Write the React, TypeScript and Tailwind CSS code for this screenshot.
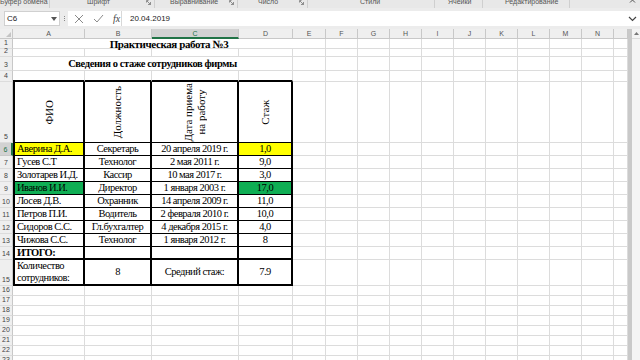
import React from 'react';

// Excel sheet: columns A..N plus the partial column before the scrollbar
const COLS = ['A', 'B', 'C', 'D', 'E', 'F', 'G', 'H', 'I', 'J', 'K', 'L', 'M', 'N', ''];
const WIDTHS = [
  'w-[72px]', 'w-[67px]', 'w-[87px]', 'w-[54px]', 'w-[33px]',
  'w-[32px]', 'w-[32px]', 'w-[32px]', 'w-[32px]', 'w-[32px]',
  'w-[32px]', 'w-[32px]', 'w-[32px]', 'w-[32px]', 'w-[14px]',
];

const GRID = 'shrink-0 border-r border-b border-[#dcdcdc]';
const SERIF = "font-['Liberation_Serif',serif] text-[10.5px] tracking-[-0.5px] text-black";

const people = [
  { name: 'Аверина Д.А.', pos: 'Секретарь', date: '20 апреля 2019 г.', st: '1,0', mark: 'bg-[#ffff00]' },
  { name: 'Гусев С.Т', pos: 'Технолог', date: '2 мая 2011 г.', st: '9,0', mark: '' },
  { name: 'Золотарев И.Д.', pos: 'Кассир', date: '10 мая 2017 г.', st: '3,0', mark: '' },
  { name: 'Иванов И.И.', pos: 'Директор', date: '1 января 2003 г.', st: '17,0', mark: 'bg-[#0fae54]' },
  { name: 'Лосев Д.В.', pos: 'Охранник', date: '14 апреля 2009 г.', st: '11,0', mark: '' },
  { name: 'Петров П.И.', pos: 'Водитель', date: '2 февраля 2010 г.', st: '10,0', mark: '' },
  { name: 'Сидоров С.С.', pos: 'Гл.бухгалтер', date: '4 декабря 2015 г.', st: '4,0', mark: '' },
  { name: 'Чижова С.С.', pos: 'Технолог', date: '1 января 2012 г.', st: '8', mark: '' },
];

function RowHead({ n, active }: { n: number; active?: boolean }) {
  return (
    <div
      className={
        active
          ? 'w-[13px] shrink-0 flex items-end justify-center bg-[#d2d2d2] border-r-2 border-r-[#217346] border-b border-b-[#c8c8c8] text-[7px] leading-[10px] tracking-normal text-[#217346] font-["Liberation_Sans",sans-serif]'
          : 'w-[13px] shrink-0 flex items-end justify-center bg-[#efefef] border-r border-r-[#c8c8c8] border-b border-b-[#dcdcdc] text-[7px] leading-[10px] tracking-normal text-[#444] font-["Liberation_Sans",sans-serif]'
      }
    >
      {n}
    </div>
  );
}

function Rest({ from }: { from: number }) {
  return (
    <>
      {WIDTHS.slice(from).map((w, i) => (
        <div key={i} className={`${w} ${GRID}`} />
      ))}
    </>
  );
}

function Ribbon() {
  const groups = [
    { w: 'w-[50px]', ml: 'ml-[0px]', label: 'Буфер обмена', icon: true },
    { w: 'w-[105px]', ml: 'ml-[37px]', label: 'Шрифт', icon: true },
    { w: 'w-[83px]', ml: 'ml-[15px]', label: 'Выравнивание', icon: true },
    { w: 'w-[70px]', ml: 'ml-[20px]', label: 'Число', icon: true },
    { w: 'w-[127px]', ml: 'ml-[52px]', label: 'Стили', icon: false },
    { w: 'w-[48px]', ml: 'ml-[13px]', label: 'Ячейки', icon: false },
    { w: 'w-[87px]', ml: 'ml-[22px]', label: 'Редактирование', icon: false },
  ];
  return (
    <div className="h-[8px] bg-[#e8e8e8] flex overflow-hidden font-['Liberation_Sans',sans-serif] text-[7px] leading-[8px] text-[#555]">
      {groups.map((g, i) => (
        <div key={i} className={`${g.w} shrink-0 flex items-start border-r border-[#cfcfcf] -mt-[2px]`}>
          <span className={`${g.ml} whitespace-nowrap`}>{g.label}</span>
          {g.icon && (
            <svg width="5" height="5" viewBox="0 0 5 5" className="ml-auto mr-[3px] mt-[2px]">
              <path d="M0.5 0.5h2M0.5 0.5v2M1 1l3.5 3.5M4.5 2v2.5H2" stroke="#777" strokeWidth="0.8" fill="none" />
            </svg>
          )}
        </div>
      ))}
      <div className="flex-1 flex justify-end pr-[4px] -mt-[1px]">
        <svg width="7" height="4" viewBox="0 0 7 4"><path d="M1 3.5L3.5 1 6 3.5" stroke="#555" strokeWidth="1" fill="none" /></svg>
      </div>
    </div>
  );
}

function FormulaBar() {
  return (
    <div className="h-[21px] bg-[#ececec] flex items-center pl-[4px] font-['Liberation_Sans',sans-serif]">
      <div className="w-[56px] h-[15px] bg-white border border-[#d0d0d0] flex items-center justify-between px-[2px] text-[8px] text-[#222]">
        <span>C6</span>
        <svg width="6" height="4" viewBox="0 0 6 4"><path d="M0 0h6L3 4z" fill="#555" /></svg>
      </div>
      <div className="w-[8px] flex flex-col items-center gap-[1px]">
        <span className="w-[1px] h-[1px] bg-[#888]" />
        <span className="w-[1px] h-[1px] bg-[#888]" />
        <span className="w-[1px] h-[1px] bg-[#888]" />
      </div>
      <div className="flex-1 h-[15px] bg-white flex items-center">
        <div className="w-[54px] flex items-center gap-[9px] pl-[6px] border-r border-[#d8d8d8] h-full">
          <svg width="10" height="10" viewBox="0 0 10 10"><path d="M1 1l8 8M9 1l-8 8" stroke="#8a8a8a" strokeWidth="1" /></svg>
          <svg width="11" height="9" viewBox="0 0 11 9"><path d="M1 5l3 3 6-7" stroke="#8a8a8a" strokeWidth="1" fill="none" /></svg>
          <span className="font-['Liberation_Serif',serif] italic text-[10px] text-[#444] leading-none">fx</span>
        </div>
        <span className="pl-[8px] text-[8px] text-[#222] flex-1">20.04.2019</span>
        <svg width="9" height="6" viewBox="0 0 9 6" className="mr-[3px]"><path d="M1 1l3.5 3.5L8 1" stroke="#444" strokeWidth="1.2" fill="none" /></svg>
      </div>
    </div>
  );
}

function HeaderRow() {
  return (
    <div className="flex h-[10px] font-['Liberation_Sans',sans-serif] text-[7px] leading-[9px] tracking-normal">
      <div className="w-[13px] shrink-0 bg-[#efefef] border-r border-b border-[#c8c8c8] flex items-end justify-end p-[1px]">
        <svg width="5" height="5" viewBox="0 0 5 5"><path d="M5 0v5H0z" fill="#c4c4c4" /></svg>
      </div>
      {COLS.map((c, i) => (
        <div
          key={i}
          className={
            i === 2
              ? `${WIDTHS[i]} shrink-0 bg-[#d2d2d2] border-r border-r-[#c8c8c8] border-b-2 border-b-[#217346] text-center text-[#217346]`
              : `${WIDTHS[i]} shrink-0 bg-[#efefef] border-r border-b border-[#c8c8c8] text-center text-[#555]`
          }
        >
          {c}
        </div>
      ))}
    </div>
  );
}

const TOP = 'shrink-0 border-r border-r-[#dcdcdc] border-b-2 border-b-black';
const TA = 'shrink-0 border-l-2 border-l-black border-r-2 border-r-black border-b border-b-black';
const TX = 'shrink-0 border-r-2 border-r-black border-b border-b-black';
const TA2 = 'shrink-0 border-l-2 border-l-black border-r-2 border-r-black border-b-2 border-b-black';
const TX2 = 'shrink-0 border-r-2 border-r-black border-b-2 border-b-black';

function Vert({ children }: { children: React.ReactNode }) {
  return <span className="[writing-mode:vertical-rl] rotate-180 text-center text-[11px] tracking-normal leading-[13px]">{children}</span>;
}

function Sheet() {
  return (
    <div className={`w-[628px] shrink-0 ${SERIF}`}>
      <HeaderRow />
      {/* 1 */}
      <div className="flex h-[10px]">
        <RowHead n={1} />
        <div className={`w-[313px] ${GRID} flex items-center justify-center font-bold text-[11px] tracking-[-0.4px] leading-[10px]`}>Практическая работа №3</div>
        <Rest from={5} />
      </div>
      {/* 2 */}
      <div className="flex h-[8px]">
        <RowHead n={2} />
        <Rest from={0} />
      </div>
      {/* 3 */}
      <div className="flex h-[14px]">
        <RowHead n={3} />
        <div className={`w-[280px] ${GRID} flex items-center justify-center font-bold tracking-[-0.4px] leading-[12px]`}>Сведения о стаже сотрудников фирмы</div>
        <Rest from={4} />
      </div>
      {/* 4 */}
      <div className="flex h-[11px]">
        <RowHead n={4} />
        <div className={`w-[72px] ${TOP}`} />
        <div className={`w-[67px] ${TOP}`} />
        <div className={`w-[87px] ${TOP}`} />
        <div className={`w-[54px] ${TOP}`} />
        <Rest from={4} />
      </div>
      {/* 5 */}
      <div className="flex h-[61px]">
        <RowHead n={5} />
        <div className={`w-[72px] ${TA} flex items-center justify-center`}><Vert>ФИО</Vert></div>
        <div className={`w-[67px] ${TX} flex items-center justify-center`}><Vert>Должность</Vert></div>
        <div className={`w-[87px] ${TX} flex items-center justify-center`}><Vert>Дата приема<br />на работу</Vert></div>
        <div className={`w-[54px] ${TX} flex items-center justify-center`}><Vert>Стаж</Vert></div>
        <Rest from={4} />
      </div>
      {people.map((p, i) => (
        <div key={i} className="flex h-[13px] leading-[12px]">
          <RowHead n={6 + i} active={i === 0} />
          <div className={`w-[72px] ${TA} ${p.mark} pl-[2px] whitespace-nowrap`}>{p.name}</div>
          <div className={`w-[67px] ${TX} text-center whitespace-nowrap`}>{p.pos}</div>
          <div className={`w-[87px] ${TX} text-center whitespace-nowrap`}>{p.date}</div>
          <div className={`w-[54px] ${TX} ${p.mark} text-center`}>{p.st}</div>
          <Rest from={4} />
        </div>
      ))}
      {/* 14 */}
      <div className="flex h-[13px] leading-[12px]">
        <RowHead n={14} />
        <div className={`w-[72px] ${TA2} pl-[2px] font-bold`}>ИТОГО:</div>
        <div className={`w-[67px] ${TX2}`} />
        <div className={`w-[87px] ${TX2}`} />
        <div className={`w-[54px] ${TX2}`} />
        <Rest from={4} />
      </div>
      {/* 15 */}
      <div className="flex h-[26px] leading-[12px]">
        <RowHead n={15} />
        <div className={`w-[72px] ${TA2} pl-[2px] flex flex-col justify-center`}>
          <span>Количество</span>
          <span>сотрудников:</span>
        </div>
        <div className={`w-[67px] ${TX2} flex items-center justify-center`}>8</div>
        <div className={`w-[87px] ${TX2} flex items-center justify-center`}>Средний стаж:</div>
        <div className={`w-[54px] ${TX2} flex items-center justify-center`}>7.9</div>
        <Rest from={4} />
      </div>
      {[16, 17, 18, 19, 20, 21, 22, 23].map((n) => (
        <div key={n} className="flex h-[10px]">
          <RowHead n={n} />
          <Rest from={0} />
        </div>
      ))}
    </div>
  );
}

function ScrollBar() {
  return (
    <div className="w-[12px] shrink-0 flex">
      <div className="w-[4px] bg-[#c9c9c9]" />
      <div className="flex-1 bg-[#f4f4f4] flex flex-col items-center">
        <div className="h-[10px] w-full flex items-center justify-center border-b border-[#dcdcdc]">
          <svg width="5" height="3" viewBox="0 0 5 3"><path d="M0 3L2.5 0 5 3z" fill="#777" /></svg>
        </div>
      </div>
    </div>
  );
}

export default function App() {
  return (
    <div className="w-[640px] h-[360px] overflow-hidden bg-white">
      <Ribbon />
      <FormulaBar />
      <div className="flex h-[331px] overflow-hidden">
        <Sheet />
        <ScrollBar />
      </div>
    </div>
  );
}
